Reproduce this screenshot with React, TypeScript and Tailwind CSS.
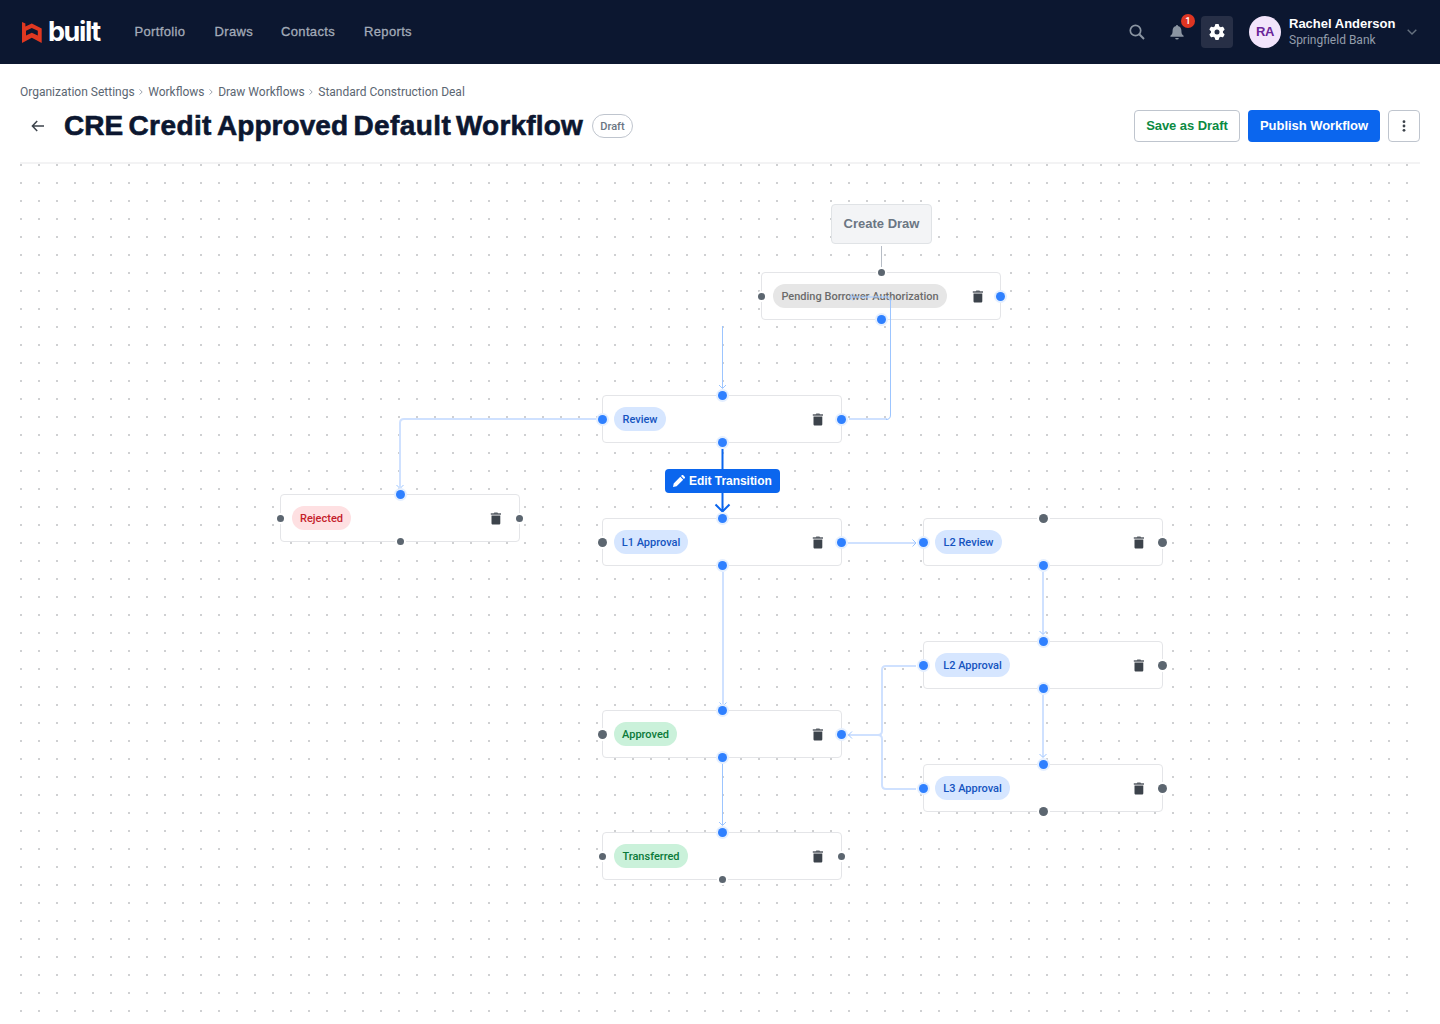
import React from "react";
import { FaGear } from "react-icons/fa6";

type Handle = "b" | "g" | "s";
type Tone = "blue" | "green" | "red" | "gray";
type NodeData = { label: string; x: number; y: number; tone: Tone; w: string; handles: [Handle, Handle, Handle, Handle] };

const ORIGIN_X = 20;
const ORIGIN_Y = 164;

const tones: Record<Tone, string> = {
  blue: "bg-[#d6e6ff] text-[#1554c0]",
  green: "bg-[#caf1da] text-[#0b7a39]",
  red: "bg-[#fee0e2] text-[#c4202b]",
  gray: "bg-[#e6e6e6] text-[#6b6b6b]",
};

// Handles are listed top, right, bottom, left.
const nodes: NodeData[] = [
  { label: "Pending Borrower Authorization", x: 761, y: 272, tone: "gray", w: "w-[174px]", handles: ["s", "b", "b", "s"] },
  { label: "Review", x: 602, y: 395, tone: "blue", w: "w-[52px]", handles: ["b", "b", "b", "b"] },
  { label: "Rejected", x: 280, y: 494, tone: "red", w: "w-[59px]", handles: ["b", "s", "s", "s"] },
  { label: "L1 Approval", x: 602, y: 518, tone: "blue", w: "w-[74px]", handles: ["b", "b", "b", "g"] },
  { label: "L2 Review", x: 923, y: 518, tone: "blue", w: "w-[67px]", handles: ["g", "g", "b", "b"] },
  { label: "L2 Approval", x: 923, y: 641, tone: "blue", w: "w-[75px]", handles: ["b", "g", "b", "b"] },
  { label: "L3 Approval", x: 923, y: 764, tone: "blue", w: "w-[75px]", handles: ["b", "g", "g", "b"] },
  { label: "Approved", x: 602, y: 710, tone: "green", w: "w-[63px]", handles: ["b", "b", "b", "g"] },
  { label: "Transferred", x: 602, y: 832, tone: "green", w: "w-[74px]", handles: ["b", "s", "s", "s"] },
];

const handleStyle: Record<Handle, string> = {
  b: "size-[9px] bg-[#2f80ff] ring-[#e4efff]",
  g: "size-[9px] bg-[#5c6670] ring-white",
  s: "size-[7px] bg-[#5c6670] ring-white",
};

const largePlace = [
  "left-[115px] top-[-5px]",
  "left-[234px] top-[19px]",
  "left-[115px] top-[42px]",
  "left-[-5px] top-[19px]",
];

const smallPlace = [
  "left-[116px] top-[-4px]",
  "left-[235px] top-[20px]",
  "left-[116px] top-[43px]",
  "left-[-4px] top-[20px]",
];

function Trash() {
  return (
    <svg className="h-[13px] w-[11px] overflow-visible" viewBox="-0.4 0 11 13" fill="#3c434b">
      <path d="M.4 1.3h2.900L4 .4h3l.7.9h2.900v1.500H.4z" opacity=".85" />
      <path d="M1.100 3.600h8.800v7.600c0 .8-.6 1.300-1.300 1.300H2.400c-.7 0-1.300-.5-1.300-1.300z" />
    </svg>
  );
}

function FlowNode({ n }: { n: NodeData }) {
  return (
    <div
      className="absolute flex h-12 w-60 items-center rounded-[4px] border border-[#e4e5e8] bg-white pl-[11px] pr-[18px]"
      style={{ left: n.x - ORIGIN_X, top: n.y - ORIGIN_Y }}
    >
      <span className={`flex h-6 items-center justify-center whitespace-nowrap rounded-full pt-[2px] font-[Roboto] text-[11px] font-medium leading-4 ${n.w} ${tones[n.tone]}`}>
        {n.label}
      </span>
      <span className={n.tone === "gray" ? "-mr-px ml-auto" : "ml-auto"}>
        <Trash />
      </span>
      {n.handles.map((h, i) => (
        <i key={i} className={`absolute rounded-full ring-2 ${h === "s" ? smallPlace[i] : largePlace[i]} ${handleStyle[h]}`} />
      ))}
    </div>
  );
}

function Edges() {
  return (
    <svg className="absolute inset-0" width="1400" height="860" viewBox="20 164 1400 860" fill="none">
      <path d="M881.500 246v23" stroke="#b6bcc5" />
      <g stroke="#cfe1ff" strokeWidth="2">
        <path d="M597 419H404q-4 0-4 4v64" />
        <path d="M848 543h68" />
        <path d="M723 572v133" />
        <path d="M1043 572v62" />
        <path d="M1043 695v62" />
        <path d="M916 666h-30q-4 0-4 4v61q0 4-4 4h-30" />
        <path d="M916 789h-30q-4 0-4-4v-46q0-4-4-4" />
        <path d="M849 419h38" />
      </g>
      <g stroke="#9cc5ff">
        <path d="M722.500 326v62" />
        <path d="M722.500 763v62" />
        <path d="M886 419.500q4.500 0 4.500-4.500V300" />
        <path d="M719 385l3.500 3.500 3.500-3.500M719 822l3.500 3.500 3.500-3.500M719.500 702.500l3.500 3.500 3.500-3.500M1039.500 631l3.500 3.500 3.500-3.500M1039.500 754l3.500 3.500 3.500-3.500M396.500 485l3.500 3.500 3.500-3.500M912.500 539.500l3.500 3.500-3.500 3.500M852 731.500l-3.500 3.500 3.500 3.500" />
      </g>
      <path d="M722.500 449v61M715.500 504.500l7 7 7-7" stroke="#0b66ee" strokeWidth="2" />
    </svg>
  );
}

function Header() {
  return (
    <header className="flex h-16 items-center bg-[#0c1730] pl-[22px] pr-[23px]">
      <svg className="h-[21px] w-5" viewBox="0 0 20 21" fill="#df3821">
        <path fillRule="evenodd" d="M0 0 3.400 1.500v2.900L9.800 1.500l9.900 4.900V21L9.800 15.800 0 21zM4 8.700v4.900l5.800-2.800 6 2.800V8.700L9.800 6z" />
      </svg>
      <span className="ml-[6px] w-[55px] font-[Inter] text-[27px] font-bold leading-8 tracking-[-1.4px] text-white">built</span>
      <nav className="ml-[31.5px] flex font-['Liberation_Sans'] text-[13px] tracking-[0.35px] text-[#a3abb8] [-webkit-text-stroke:0.3px_#a3abb8]">
        <span className="w-20">Portfolio</span>
        <span className="w-[66.5px]">Draws</span>
        <span className="w-[83px]">Contacts</span>
        <span>Reports</span>
      </nav>
      <div className="ml-auto flex items-center">
        <svg className="size-4" viewBox="0 0 16 16" fill="none" stroke="#8b95a2" strokeWidth="1.700">
          <circle cx="6.500" cy="6.500" r="5.200" />
          <path d="M10.300 10.300l4.700 4.700" strokeWidth="2" />
        </svg>
        <div className="relative ml-[25px]">
          <svg className="h-4 w-[14px]" viewBox="0 0 14 16" fill="#8b95a2">
            <path d="M6.200.9h1.600v1.200c2.300.5 3.600 2.300 3.600 4.500 0 2.500.4 4.300 2.200 5.200v1H.4v-1c1.800-.9 2.200-2.700 2.200-5.200 0-2.200 1.300-4 3.600-4.500zM5.200 14h3.600a1.800 1.600 0 0 1-3.600 0z" />
          </svg>
          <span className="absolute left-[11px] top-[-10px] flex size-[14px] items-center justify-center rounded-full bg-[#de3522] font-[Roboto] text-[9.5px] font-medium text-white">1</span>
        </div>
        <div className="ml-[17px] flex size-8 items-center justify-center rounded-[4px] bg-[#272f46]">
          <FaGear className="size-4 text-white" />
        </div>
        <div className="ml-4 flex size-8 items-center justify-center rounded-full bg-[#f2e4fb] font-['Liberation_Sans'] text-[13px] font-bold tracking-[-0.5px] text-[#6a2499]">RA</div>
        <div className="ml-2 flex w-[118px] flex-col">
          <span className="whitespace-nowrap font-['Liberation_Sans'] text-[13px] font-bold leading-4 text-white">Rachel Anderson</span>
          <span className="font-[Roboto] text-xs leading-4 text-[#939dab]">Springfield Bank</span>
        </div>
        <svg className="h-[6px] w-[10px]" viewBox="0 0 10 6" fill="none" stroke="#66717f" strokeWidth="1.400">
          <path d="M.7.7 5 5 9.300.7" />
        </svg>
      </div>
    </header>
  );
}

function Chevron() {
  return (
    <svg className="mx-[4.8px] h-[6px] w-1" viewBox="0 0 4 6" fill="none" stroke="#9aa2ad">
      <path d="M.6.4 3.200 3 .6 5.600" />
    </svg>
  );
}

export default function App() {
  return (
    <div className="h-[1024px] w-[1440px] overflow-hidden bg-white">
      <Header />
      <div className="mt-[18px] flex h-5 items-center whitespace-nowrap pl-5 font-[Roboto] text-xs text-[#5b6672]">
        <span>Organization Settings</span>
        <Chevron />
        <span>Workflows</span>
        <Chevron />
        <span>Draw Workflows</span>
        <Chevron />
        <span>Standard Construction Deal</span>
      </div>
      <div className="mt-2 flex h-8 items-center px-5">
        <svg className="ml-[11px] h-3 w-[13px]" viewBox="0 0 13 12" fill="none" stroke="#3c434b" strokeWidth="1.500">
          <path d="M13 6H1.500M6.200 1 1.400 6l4.800 5" />
        </svg>
        <h1 className="ml-5 flex w-[528px] whitespace-pre font-['Liberation_Sans'] text-[28px] font-bold leading-8 text-[#0c1730] [-webkit-text-stroke:0.6px_#0c1730]">
          <span className="w-[64.5px]">{"CRE "}</span>
          <span className="w-[88.5px] tracking-[0.4px]">{"Credit "}</span>
          <span className="w-[136.5px] tracking-[0.05px]">{"Approved "}</span>
          <span className="w-[102.5px] tracking-[0.4px]">{"Default "}</span>
          <span className="tracking-[0.2px]">Workflow</span>
        </h1>
        <span className="flex h-6 w-[41px] items-center justify-center rounded-full border border-[#bfc5ce] pt-px font-[Roboto] text-[11px] font-medium leading-4 text-[#6b7683]">Draft</span>
        <div className="ml-auto flex gap-2 font-['Liberation_Sans'] text-[13px] font-bold tracking-[-0.05px]">
          <button className="h-8 w-[106px] whitespace-nowrap rounded-[4px] border border-[#bfc5ce] text-[#0b8a43]">Save as Draft</button>
          <button className="h-8 w-[132px] whitespace-nowrap rounded-[4px] bg-[#0b66ee] text-white">Publish Workflow</button>
          <button className="flex size-8 items-center justify-center rounded-[4px] border border-[#bfc5ce]">
            <svg className="h-3 w-1" viewBox="0 0 4 12" fill="#3c434b">
              <circle cx="2" cy="1.700" r="1.400" />
              <circle cx="2" cy="6" r="1.400" />
              <circle cx="2" cy="10.300" r="1.400" />
            </svg>
          </button>
        </div>
      </div>
      <div className="mx-5 mt-5 h-[2px] bg-[#f3f3f4]" />
      <main className="relative mx-5 h-[860px] bg-[conic-gradient(at_2px_2px,#fff_75%,#cfd0d2_0)] bg-[length:18px_18px]">
        <div className="absolute left-[811px] top-10 flex h-10 w-[101px] items-center justify-center rounded-[4px] border border-[#e0e3e6] bg-[#f3f4f6] font-['Liberation_Sans'] text-[13px] font-bold text-[#6b7683]">
          Create Draw
        </div>
        <Edges />
        {nodes.map((n) => (
          <FlowNode key={n.label} n={n} />
        ))}
        <svg className="absolute left-[820px] top-[125px]" width="60" height="40" viewBox="840 289 60 40" fill="none">
          <path d="M850 297h36q4.500 0 4.500 4" stroke="#a9ccff" strokeWidth="2" opacity=".6" />
          <path d="M890.500 329V300M853 293.500l-3.500 3.500 3.500 3.500" stroke="#9cc5ff" />
        </svg>
        <div className="absolute left-[645px] top-[305px] flex h-6 w-[115px] items-center whitespace-nowrap rounded-[4px] bg-[#0b66ee] pl-2 font-['Liberation_Sans'] text-xs font-bold tracking-[-0.04px] text-white">
          <svg className="mr-1 size-3" viewBox="0 0 12 12" fill="#fff">
            <path d="M0 12l.7-3.600L7.300 1.800l2.900 2.900-6.600 6.600zM8 1.100 8.800.3a1 1 0 0 1 1.500 0l1.400 1.400a1 1 0 0 1 0 1.500l-.8.8z" />
          </svg>
          Edit Transition
        </div>
      </main>
    </div>
  );
}
